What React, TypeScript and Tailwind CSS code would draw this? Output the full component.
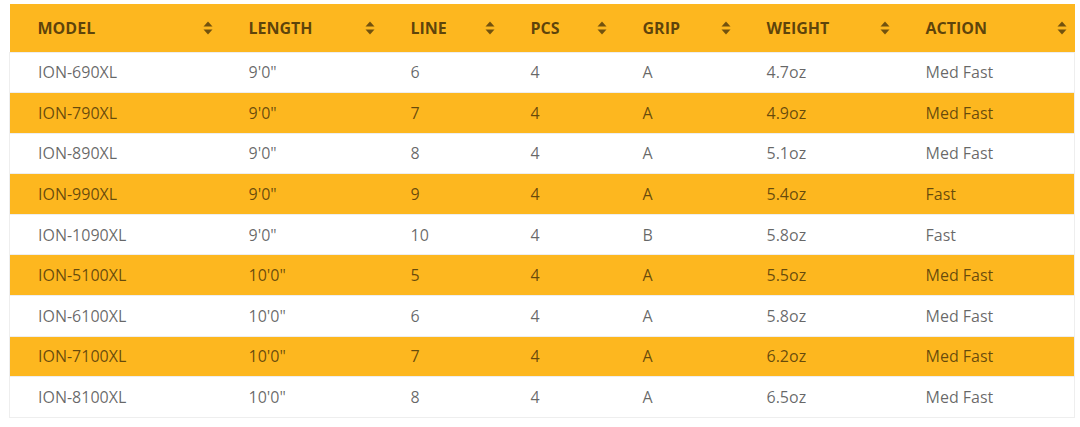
import { FC } from 'react';

type Rod = {
  model: string;
  length: string;
  line: string;
  pcs: string;
  grip: string;
  weight: string;
  action: string;
};

const columns = [
  { label: 'Model', width: 'w-[211px]' },
  { label: 'Length', width: 'w-[162px]' },
  { label: 'Line', width: 'w-[120px]' },
  { label: 'Pcs', width: 'w-[112px]' },
  { label: 'Grip', width: 'w-[124px]' },
  { label: 'Weight', width: 'w-[159px]' },
  { label: 'Action', width: 'w-[177px]' },
];

const rods: Rod[] = [
  { model: 'ION-690XL', length: `9'0"`, line: '6', pcs: '4', grip: 'A', weight: '4.7oz', action: 'Med Fast' },
  { model: 'ION-790XL', length: `9'0"`, line: '7', pcs: '4', grip: 'A', weight: '4.9oz', action: 'Med Fast' },
  { model: 'ION-890XL', length: `9'0"`, line: '8', pcs: '4', grip: 'A', weight: '5.1oz', action: 'Med Fast' },
  { model: 'ION-990XL', length: `9'0"`, line: '9', pcs: '4', grip: 'A', weight: '5.4oz', action: 'Fast' },
  { model: 'ION-1090XL', length: `9'0"`, line: '10', pcs: '4', grip: 'B', weight: '5.8oz', action: 'Fast' },
  { model: 'ION-5100XL', length: `10'0"`, line: '5', pcs: '4', grip: 'A', weight: '5.5oz', action: 'Med Fast' },
  { model: 'ION-6100XL', length: `10'0"`, line: '6', pcs: '4', grip: 'A', weight: '5.8oz', action: 'Med Fast' },
  { model: 'ION-7100XL', length: `10'0"`, line: '7', pcs: '4', grip: 'A', weight: '6.2oz', action: 'Med Fast' },
  { model: 'ION-8100XL', length: `10'0"`, line: '8', pcs: '4', grip: 'A', weight: '6.5oz', action: 'Med Fast' },
];

const SortIcon: FC = () => (
  <svg width="10" height="14" viewBox="0 0 10 14" className="fill-current">
    <path d="M5 0.5 L9.5 5.5 H0.5 Z" />
    <path d="M5 13.5 L9.5 8.5 H0.5 Z" />
  </svg>
);

export default function App() {
  return (
    <div className="bg-white min-h-screen pt-1 pl-[9px] font-['Open_Sans',sans-serif]">
      <table className="table-fixed border-collapse w-[1065px] text-base">
        <thead>
          <tr className="bg-[#fdb71f] h-12">
            {columns.map((col) => (
              <th
                key={col.label}
                className={`${col.width} pl-7 pr-2 text-left font-bold uppercase text-black/65`}
              >
                <div className="flex items-center justify-between">
                  <span>{col.label}</span>
                  <span className="text-black/55">
                    <SortIcon />
                  </span>
                </div>
              </th>
            ))}
          </tr>
        </thead>
        <tbody>
          {rods.map((rod, i) => (
            <tr
              key={rod.model}
              className={`h-[40.6px] border border-[#eeeeee] ${i % 2 === 1 ? 'bg-[#fdb71f]' : 'bg-white'}`}
            >
              {[rod.model, rod.length, rod.line, rod.pcs, rod.grip, rod.weight, rod.action].map((v, j) => (
                <td key={j} className="pl-7 text-black/60">
                  {v}
                </td>
              ))}
            </tr>
          ))}
        </tbody>
      </table>
    </div>
  );
}
